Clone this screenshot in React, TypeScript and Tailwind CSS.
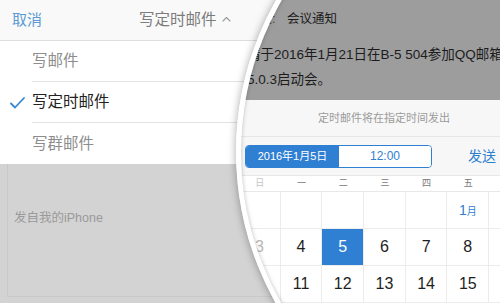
import React from 'react';

const font = { fontFamily: '"Liberation Sans", "Noto Sans CJK SC", sans-serif' };

const weekdays = ['日', '一', '二', '三', '四', '五', '六'];

// calendar rows for Jan 2016 (Jan 1st is a Friday)
const rows: (string | null)[][] = [
  [null, null, null, null, null, '1月', '2'],
  ['3', '4', '5', '6', '7', '8', '9'],
  ['10', '11', '12', '13', '14', '15', '16'],
];

const Check = () => (
  <svg width="15" height="12" viewBox="0 0 15 12" fill="none">
    <path d="M1 6.5 L5 10.5 L14 1" stroke="#3a86d0" strokeWidth="1.8" strokeLinecap="round" strokeLinejoin="round" />
  </svg>
);

const ChevronUp = () => (
  <svg width="9" height="6" viewBox="0 0 9 6" fill="none">
    <path d="M1 5 L4.5 1.5 L8 5" stroke="#9a9a9a" strokeWidth="1.1" strokeLinecap="round" strokeLinejoin="round" />
  </svg>
);

const MenuRow: React.FC<{ label: string; active?: boolean; last?: boolean }> = ({ label, active, last }) => (
  <div className="flex h-[41px] items-stretch">
    <div className="flex w-[32px] items-center pl-[10px]">{active && <Check />}</div>
    <div
      className={`flex flex-1 items-center text-[15.5px] ${last ? '' : 'border-b border-[#e3e3e3]'} ${
        active ? 'text-[#222]' : 'text-[#8d8d8d]'
      }`}
    >
      {label}
    </div>
  </div>
);

// everything seen through the magnifier, laid out in page coordinates
const Zoomed = () => (
  <div className="ml-[-241px] mt-[151px] w-[500px]">
    {/* dimmed mail body */}
    <div className="h-[100px] bg-[#9d9d9d] pl-[247px] text-[#1c1c1c]">
      <div className="flex h-[38px] items-center text-[12.5px]">
        <span className="inline-block w-[40px] text-[#4a4a4a]">主题:</span>
        <span>会议通知</span>
      </div>
      <div className="whitespace-nowrap pt-[4px] text-[13.5px] leading-[25px]">
        <div>请于2016年1月21日在B-5 504参加QQ邮箱</div>
        <div>5.0.3启动会。</div>
      </div>
    </div>

    <div className="bg-white">
      <div className="flex h-[37px] items-center border-b border-[#e6e6e6] bg-[#f7f7f7] pl-[318px] text-[11px] text-[#9b9b9b]">
        定时邮件将在指定时间发出
      </div>

      <div className="flex h-[38px] items-center bg-[#f7f7f7] pl-[245px]">
        <div className="flex h-[23px] w-[187px] overflow-hidden rounded-[4px] border border-[#2f80d2]">
          <div className="flex w-[93px] items-center justify-center bg-[#2f80d2] text-[11px] text-white">2016年1月5日</div>
          <div className="flex flex-1 items-center justify-center bg-white text-[12px] text-[#2f80d2]">12:00</div>
        </div>
        <div className="ml-[36px] text-[14px] text-[#2f7fd1]">发送</div>
      </div>

      <div className="border-y border-[#e8e8e8]">
        <div className="ml-[239px] grid h-[15px] grid-cols-[repeat(7,41.7px)] items-center text-[9px]">
          {weekdays.map((d, i) => (
            <div key={d} className={`text-center ${i === 0 ? 'text-[#c4c4c4]' : 'text-[#7a7a7a]'}`}>
              {d}
            </div>
          ))}
        </div>
      </div>

      {rows.map((row, ri) => (
        <div key={ri} className="border-b border-[#ececec]">
          <div className="ml-[239px] grid h-[36px] grid-cols-[repeat(7,41.7px)]">
            {row.map((cell, ci) => {
              const selected = cell === '5';
              return (
                <div
                  key={ci}
                  className={`flex items-center justify-center border-r border-[#ececec] ${
                    selected ? 'bg-[#2f80d2] text-white' : ci === 0 ? 'text-[#b8b8b8]' : 'text-[#1e1e1e]'
                  }`}
                >
                  {cell === '1月' ? (
                    <span className="text-[#2f80d2]">
                      <span className="text-[14px]">1</span>
                      <span className="text-[10px]">月</span>
                    </span>
                  ) : (
                    <span className="text-[16px]">{cell}</span>
                  )}
                </div>
              );
            })}
          </div>
        </div>
      ))}
      <div className="h-[20px]" />
    </div>
  </div>
);

export default function App() {
  return (
    <div className="relative h-[303px] w-[500px] overflow-hidden bg-[#d3d3d3]" style={font}>
      {/* compose screen with the send menu open */}
      <div className="flex h-[41px] items-center border-b border-[#dedede] bg-[#f9f9f9] pl-[12px]">
        <span className="text-[15px] text-[#5b9ad4]">取消</span>
        <span className="ml-[97px] text-[15.5px] text-[#7c7c7c]">写定时邮件</span>
        <span className="ml-[5px] mt-[-2px]">
          <ChevronUp />
        </span>
      </div>
      <div className="bg-white">
        <MenuRow label="写邮件" />
        <MenuRow label="写定时邮件" active />
        <MenuRow label="写群邮件" last />
      </div>
      <div className="ml-[7px] h-[133px] border-b border-l border-[#c9c9c9] pl-[6px] pt-[45px] text-[12.5px] text-[#9a9a9a]">
        发自我的iPhone
      </div>

      {/* magnifier lens */}
      <div className="absolute left-[236px] top-[-156px] h-[616px] w-[616px] overflow-hidden rounded-full border-[5px] border-white shadow-[0_0_8px_rgba(0,0,0,0.35)]">
        <Zoomed />
        <div className="pointer-events-none absolute inset-0 rounded-full shadow-[inset_0_0_4px_rgba(0,0,0,0.25)]" />
      </div>
    </div>
  );
}
